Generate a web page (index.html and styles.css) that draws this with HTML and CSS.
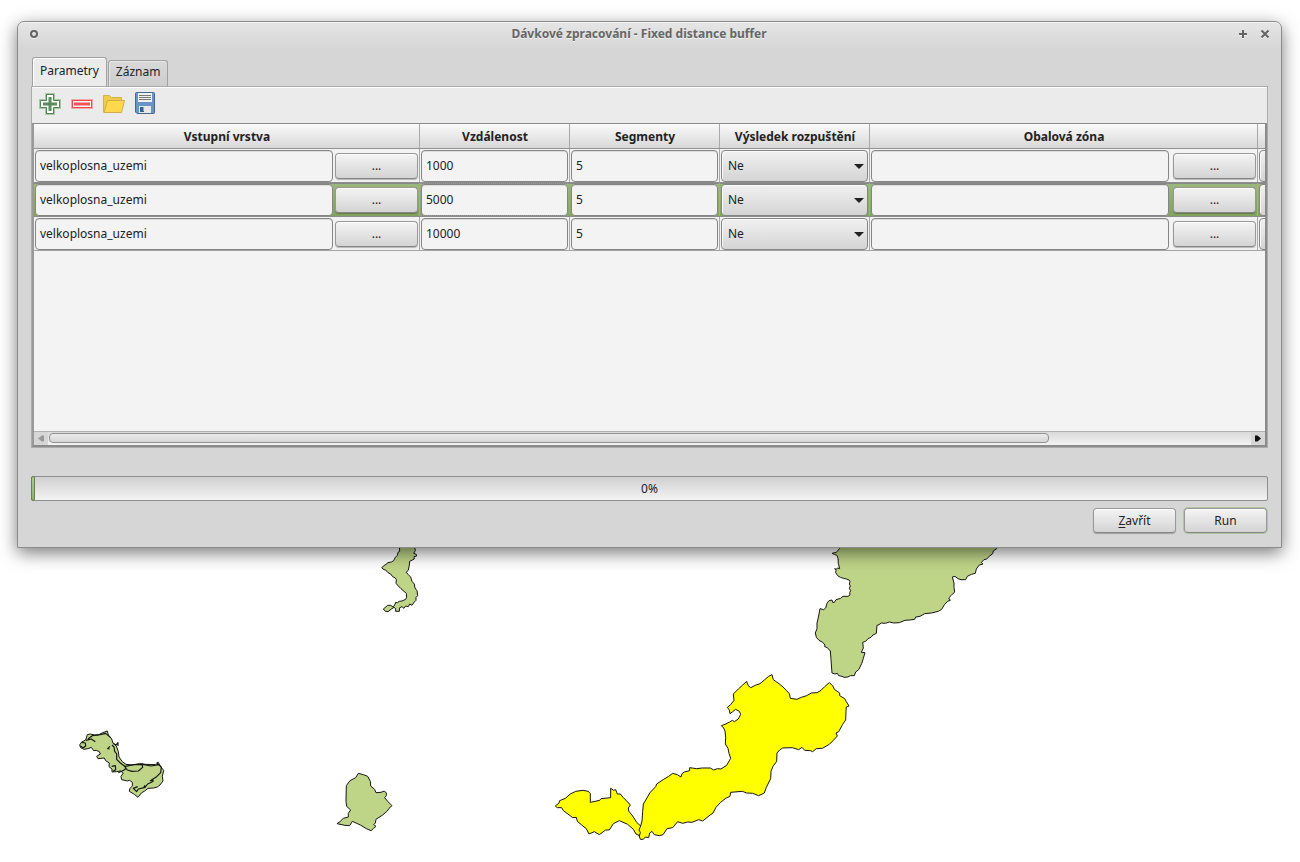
FILE: index.html
```html
<!DOCTYPE html>
<html lang="cs">
<head>
<meta charset="utf-8">
<title>Dávkové zpracování - Fixed distance buffer</title>
<link rel="stylesheet" href="styles.css">
</head>
<body>
<svg class="map" width="1300" height="862" viewBox="0 0 1300 862" aria-hidden="true">
  <g class="area" transform="translate(360 530) scale(.33333)">
    <path d="M118 45 L119 64 L114 67 L112 76 L106 82 L101 92 L94 96 L84 98 L78 103 L72 107 L65 113 L72 119 L77 120 L84 128 L92 132 L98 140 L106 144 L109 149 L108 160 L115 168 L123 176 L132 184 L139 190 L140 202 L137 208 L126 213 L118 214 L112 218 L107 217 L104 225 L99 231 L92 226 L83 226 L76 232 L70 237 L76 244 L84 245 L93 238 L102 232 L107 236 L107 244 L118 244 L119 233 L126 230 L132 235 L137 228 L145 230 L149 222 L156 226 L163 216 L168 211 L168 202 L173 197 L171 182 L165 174 L163 162 L156 154 L152 141 L145 134 L139 127 L145 120 L148 105 L149 94 L163 87 L162 80 L170 78 L169 73 L161 70 L166 62 L163 45Z"/>
  </g>
  <g class="area" transform="translate(800 540) scale(.33333)">
    <path d="M118 15 L119 25 L114 31 L109 37 L96 40 L103 43 L111 46 L114 55 L115 70 L119 86 L112 84 L109 88 L104 86 L108 91 L107 98 L113 107 L121 112 L131 115 L139 117 L147 120 L150 124 L148 132 L151 138 L148 145 L152 152 L149 158 L150 165 L144 169 L129 169 L122 175 L108 179 L103 187 L98 187 L96 180 L87 182 L81 190 L77 204 L71 209 L60 206 L57 222 L54 237 L51 249 L51 266 L46 279 L49 292 L57 301 L68 307 L75 315 L74 320 L82 323 L91 333 L93 358 L96 399 L105 402 L112 400 L116 407 L126 409 L132 412 L144 411 L151 407 L163 407 L167 396 L176 389 L185 371 L190 355 L195 338 L184 337 L190 324 L188 307 L197 304 L204 296 L213 292 L219 285 L229 280 L231 256 L237 254 L244 249 L256 250 L268 246 L281 249 L298 248 L315 241 L330 240 L344 238 L347 231 L360 229 L374 221 L395 219 L415 214 L425 208 L434 193 L443 184 L451 181 L446 174 L454 166 L464 156 L462 142 L462 129 L457 111 L465 109 L474 116 L483 119 L497 119 L502 109 L514 103 L526 100 L529 87 L538 75 L549 72 L544 67 L552 59 L560 57 L568 49 L578 41 L580 33 L590 26 L594 15Z"/>
  </g>
  <g class="area selected" transform="translate(545 665) scale(.33333)">
    <path d="M31 423 L42 414 L44 407 L61 400 L76 387 L92 379 L114 376 L130 379 L136 386 L136 412 L150 409 L164 406 L168 401 L197 398 L197 370 L206 376 L212 374 L217 387 L226 387 L235 398 L248 411 L256 420 L250 429 L251 438 L263 453 L275 472 L287 483 L291 468 L293 440 L295 417 L304 402 L315 383 L332 365 L335 357 L356 343 L371 334 L383 325 L397 329 L408 336 L411 326 L418 321 L434 317 L434 308 L455 311 L472 309 L496 309 L506 315 L517 311 L528 312 L545 301 L557 280 L552 265 L549 250 L541 237 L542 218 L540 198 L536 189 L529 182 L540 178 L554 171 L562 166 L568 170 L580 162 L587 148 L583 139 L572 133 L563 140 L555 146 L553 135 L547 127 L557 119 L567 106 L565 87 L581 71 L592 61 L605 49 L609 61 L617 68 L631 61 L645 56 L658 45 L671 34 L681 29 L685 44 L702 56 L714 66 L724 76 L733 86 L736 100 L756 103 L769 97 L785 92 L799 84 L816 83 L828 76 L839 65 L853 53 L863 62 L868 73 L884 84 L884 92 L899 101 L904 110 L912 123 L904 126 L903 139 L902 165 L893 178 L881 200 L873 204 L877 213 L865 226 L853 238 L832 250 L814 251 L803 260 L796 257 L779 256 L771 247 L761 254 L742 248 L713 249 L704 255 L696 264 L695 289 L684 304 L678 319 L677 341 L664 367 L658 384 L641 392 L623 385 L605 384 L592 379 L557 382 L555 394 L542 400 L527 412 L513 427 L504 444 L489 455 L473 468 L461 464 L441 472 L428 471 L413 475 L398 470 L383 488 L366 491 L354 509 L343 512 L328 509 L321 499 L314 504 L311 518 L301 516 L295 523 L286 523 L282 511 L273 507 L265 493 L248 478 L223 467 L205 476 L193 495 L182 495 L163 509 L148 500 L132 507 L124 491 L110 480 L97 469 L94 457 L83 458 L74 451 L55 437 L50 428 L37 428Z M287 483 L282 495 L286 502 L283 514"/>
  </g>
  <g class="area" transform="translate(70 720) scale(.33333)">
    <path d="M52 44 L61 42 L74 45 L85 45 L98 38 L112 33 L115 45 L125 57 L129 69 L139 78 L145 95 L147 111 L157 125 L168 133 L186 135 L209 131 L228 133 L257 134 L265 127 L271 139 L281 151 L277 169 L279 183 L270 195 L262 201 L251 204 L234 205 L224 213 L214 219 L204 232 L193 223 L178 214 L180 205 L187 198 L187 187 L179 181 L172 183 L155 179 L153 169 L160 159 L152 153 L139 155 L126 156 L126 147 L117 140 L118 129 L107 122 L103 114 L84 116 L80 109 L91 102 L88 95 L79 91 L71 92 L64 82 L54 86 L42 88 L32 83 L29 75 L35 66 L47 60Z"/>
    <path class="detail" d="M35 67 L46 69 L47 78 L40 83 L31 78 M48 61 L64 57 L76 65 M54 57 L67 47 L90 44 L107 40 L121 52 M120 79 L113 86 L119 87 M129 70 L138 75 L144 68 L144 78 M126 75 L132 81 L134 94 L140 102 L140 118 L151 129 L164 139 L172 150 L186 154 L205 153 L218 142 L216 131 M163 140 L190 134 L218 133 L243 138 L266 134 L274 141 L272 158 L260 170 L248 178 L246 186 L233 192 L225 202 L205 207 L200 215 L190 205 L203 200 M240 183 L248 178 L250 185 M125 139 L136 137 L137 149 L129 154 M145 158 L161 151 L169 145 M261 126 L265 135 M225 196 L220 205"/>
  </g>
  <g class="area" transform="translate(325 765) scale(.33333)">
    <path d="M64 62 L75 47 L92 38 L100 25 L115 29 L128 34 L136 49 L137 63 L149 73 L153 83 L168 82 L178 78 L184 84 L184 92 L179 98 L188 109 L201 122 L192 130 L187 138 L173 150 L153 163 L151 174 L146 179 L153 184 L146 190 L138 197 L124 191 L106 180 L82 169 L74 182 L60 181 L36 176 L45 170 L55 160 L70 156 L70 145 L77 135 L65 124 L63 109Z"/>
  </g>
</svg>

<section class="dialog">
  <header class="titlebar">
    <svg class="win-icon" width="10" height="10"><circle class="halo" cx="5" cy="6" r="3"/><circle cx="5" cy="5" r="3"/></svg>
    <h1>Dávkové zpracování - Fixed distance buffer</h1>
    <svg class="win-icon" width="10" height="10"><path class="halo" d="M1 6H9M5 2V10"/><path d="M1 5H9M5 1V9"/></svg>
    <svg class="win-icon close" width="10" height="10"><path class="halo" d="M1.5 2.5L8.5 9.5M8.5 2.5L1.5 9.5"/><path d="M1.5 1.5L8.5 8.5M8.5 1.5L1.5 8.5"/></svg>
  </header>

  <nav class="tabs"><div class="tab active">Parametry</div><div class="tab">Záznam</div></nav>

  <main class="panel">
    <div class="toolbar">
      <svg width="22" height="22"><path fill="#fff" stroke="#a9c6a9" stroke-width="3" d="M7.5 1.5h7v6h6v7h-6v6h-7v-6h-6v-7h6z"/><path fill="#fff" stroke="#558755" d="M7.5 1.5h7v6h6v7h-6v6h-7v-6h-6v-7h6z"/><path fill="none" stroke="#588c58" stroke-width="3" d="M11 4v14M4 11h14"/></svg>
      <svg width="22" height="22"><rect x="0" y="6" width="22" height="10" fill="#f9a5a5"/><rect x="1.5" y="7.5" width="19" height="7" fill="#fff" stroke="#e84e4e"/><path stroke="#f05050" stroke-width="3" d="M3 11h16"/></svg>
      <svg class="folder" width="24" height="22"><path fill="#f1cb48" stroke="#cdb155" d="M1.5 19V2.500h6l2 2h10v3l-2 12H2.500z"/><path fill="#ffd84c" stroke="#cfae45" d="M2 19.500L5.500 7.500H22.500L19.500 19.500z"/></svg>
      <svg class="save" width="20" height="22"><path fill="#6994c5" stroke="#46698f" d="M.5 1.500q0-1 1-1h17q1 0 1 1v19q0 1-1 1H2L.5 20z"/><path fill="#f1f2ef" d="M3 1h14v9H3z"/><path stroke="#777" d="M4 3.500h12M4 5.500h12M4 7.500h12"/><path fill="#e8e9e6" d="M4 14h12v7H4z"/><path fill="#385f8e" d="M5 15h4v5H5z"/><path fill="#8aa9c9" d="M8 15h1v4H8z"/></svg>
    </div>
    <div class="table">
      <div class="row head"><div>Vstupní vrstva</div><div>Vzdálenost</div><div>Segmenty</div><div>Výsledek rozpuštění</div><div>Obalová zóna</div><div></div></div>
      <div class="row before">
        <div class="cell pick"><span class="field">velkoplosna_uzemi</span><span class="button">...</span></div>
        <div class="cell"><span class="field">1000</span></div>
        <div class="cell"><span class="field">5</span></div>
        <div class="cell"><span class="combo">Ne<i></i></span></div>
        <div class="cell pick out"><span class="field"></span><span class="button">...</span></div>
        <div class="cell"><span class="combo cut"></span></div>
      </div>
      <div class="row current">
        <div class="cell pick"><span class="field">velkoplosna_uzemi</span><span class="button">...</span></div>
        <div class="cell focus"><span class="field">5000</span></div>
        <div class="cell"><span class="field">5</span></div>
        <div class="cell"><span class="combo">Ne<i></i></span></div>
        <div class="cell pick out"><span class="field"></span><span class="button">...</span></div>
        <div class="cell"><span class="combo cut"></span></div>
      </div>
      <div class="row">
        <div class="cell pick"><span class="field">velkoplosna_uzemi</span><span class="button">...</span></div>
        <div class="cell"><span class="field">10000</span></div>
        <div class="cell"><span class="field">5</span></div>
        <div class="cell"><span class="combo">Ne<i></i></span></div>
        <div class="cell pick out"><span class="field"></span><span class="button">...</span></div>
        <div class="cell"><span class="combo cut"></span></div>
      </div>
      <div class="empty"></div>
      <div class="scrollbar">
        <svg width="14" height="13"><path fill="#999" d="M4 6.500L8 3.500h2v6H8z"/></svg>
        <div class="track"><div class="thumb"></div></div>
        <svg width="14" height="13"><path fill="#111" d="M4 3.500h2.500L10 6.500L6.500 9.500H4z"/></svg>
      </div>
    </div>
  </main>

  <div class="progress"><div class="chunk"></div><span>0%</span></div>
  <footer class="actions"><div class="button"><span><u>Z</u>avřít</span></div><div class="button default">Run</div></footer>
</section>
</body>
</html>
```

FILE: styles.css
```css
* { box-sizing: border-box; }
body {
  margin: 0;
  width: 1300px;
  height: 862px;
  overflow: hidden;
  padding: 21px 18px 0 17px;
  background: #fff;
  color: #222;
  font: 12px/16px "Noto Sans", sans-serif;
}
.map { position: absolute; left: 0; top: 0; }
.area path { fill: #bed487; stroke: #151515; stroke-width: 3; stroke-linejoin: round; }
.area.selected path { fill: #ff0; }
.area .detail { fill: none; stroke-width: 3.5; }

.dialog {
  position: relative;
  display: flex;
  flex-direction: column;
  width: 1265px;
  height: 527px;
  padding: 0 13px 0 13px;
  border: 1px solid #8b8b8b;
  border-radius: 7px 7px 0 0;
  background: linear-gradient(#e6e6e6, #d6d6d6 26px);
  box-shadow: inset 0 1px #f3f3f3, 0 5px 17px rgba(0, 0, 0, .52);
}
.titlebar { display: flex; align-items: center; height: 24px; padding: 0 1px 0 0; margin-left: -2px; }
.titlebar h1 { flex: 1; margin: 0; padding-left: 1px; text-align: center; font-size: 12px; font-weight: 700; color: #666; text-shadow: 0 1px #f2f2f2; }
.win-icon { fill: none; stroke: #646464; stroke-width: 2; }
.win-icon .halo { stroke: #f4f4f4; }
.win-icon.close { margin-left: 12px; margin-right: -3px; }

.tabs { display: flex; align-items: flex-end; gap: 1px; height: 40px; padding-left: 1px; }
.tab {
  height: 26px;
  padding: 3px 7px;
  border: 1px solid #a1a1a1;
  border-bottom: 0;
  border-radius: 3px 3px 0 0;
  background: linear-gradient(#d9d9d9, #cdcdcd);
  box-shadow: inset 1px 1px #e6e6e6;
}
.tab.active { height: 29px; padding-top: 5px; background: #ebebeb; box-shadow: inset 1px 1px #fff; }

.panel {
  display: flex;
  flex-direction: column;
  height: 362px;
  border: 1px solid #ababab;
  background: #ebebeb;
  box-shadow: inset 0 1px #fff;
}
.toolbar { display: flex; align-items: flex-start; gap: 10px; height: 36px; padding: 6px 0 0 7px; }
.folder { margin-left: -1px; margin-right: 0; }
.save { margin-left: -1px; margin-top: -1px; }

.table {
  display: flex;
  flex-direction: column;
  flex: 1;
  border: 1px solid #8b8b8b;
  border-width: 1px 2px 2px 1px;
  border-left: 2px solid #999;
  background: #f3f3f3;
  overflow: hidden;
}
.row { display: grid; grid-template-columns: 386px 150px 150px 150px 388px 8px; height: 34px; border-bottom: 1px solid #a3a3a3; overflow: hidden; }
.row > div { border-right: 1px solid #a9a9a9; }
.row > div:last-child { border-right: 0; overflow: hidden; }
.head { height: 25px; border-color: #929292; background: linear-gradient(#fafafa, #d8d8d8); font-weight: 700; line-height: 26px; text-align: center; }
.head > div { padding-left: 1px; }
.cell { display: flex; align-items: center; padding: 1px 1px 0; background: #f3f3f3; }
.before, .current { border-bottom-color: #8d8d8d; }
.current .cell { background: linear-gradient(#9bb97d, #82a25f); box-shadow: inset 0 1px #888; }
.current .focus { outline: 1px dotted #999; outline-offset: -1px; }
.field, .combo {
  display: flex;
  align-items: center;
  flex: 1;
  height: 32px;
  padding: 0 4px 1px;
  border: 1px solid #858585;
  border-radius: 4px;
  background: #f3f3f3;
  box-shadow: inset 0 1px #ddd;
}
.pick .field { flex: 0 0 298px; }
.pick .button { margin-left: 2px; width: 84px; height: 26px; }
.pick.out .button { margin-left: 4px; }
.combo { justify-content: space-between; padding: 0 3px 1px 6px; background: linear-gradient(#f1f1f1, #d4d4d4); box-shadow: inset 1px 1px #fafafa; }
.combo i { border: 5px solid transparent; border-top-color: #222; border-bottom: 0; margin-top: 1px; }
.combo.cut { flex: 0 0 100px; }
.button {
  display: flex;
  align-items: center;
  justify-content: center;
  border: 1px solid #989898;
  border-bottom-color: #858585;
  border-radius: 4px;
  background: linear-gradient(#f4f4f4, #d4d4d4);
  box-shadow: inset 0 1px #fff, 0 1px 1px rgba(0, 0, 0, .25);
}
.empty { flex: 1; }
.scrollbar { display: flex; height: 14px; border-top: 1px solid #b0b0b0; background: #d6d6d6; }
.track { flex: 1; padding: 1px 0; background: linear-gradient(#dadada, #f3f3f3); }
.thumb { width: 1000px; margin-left: 1px; height: 10px; border: 1px solid #929292; border-radius: 4px; background: linear-gradient(#ececec, #d6d6d6); }

.progress {
  display: flex;
  align-items: center;
  justify-content: center;
  height: 25px;
  margin-top: 28px;
  border: 1px solid #8e8e8e;
  border-radius: 2px;
  background: linear-gradient(#d0d0d0, #f3f3f3);
}
.chunk { align-self: stretch; width: 4px; margin: -1px auto -1px -1px; border: 1px solid #66834b; border-radius: 2px; background: linear-gradient(#adc98f, #91b16e); }
.progress span { margin-right: auto; padding-right: 3px; }
.actions { display: flex; justify-content: flex-end; gap: 8px; margin-top: 7px; padding-right: 1px; }
.actions .button { width: 83px; height: 25px; }
.actions .default { box-shadow: inset 0 1px #fff, 0 0 0 1px #b2c39f; }
.actions u { text-underline-offset: 2px; }
```
